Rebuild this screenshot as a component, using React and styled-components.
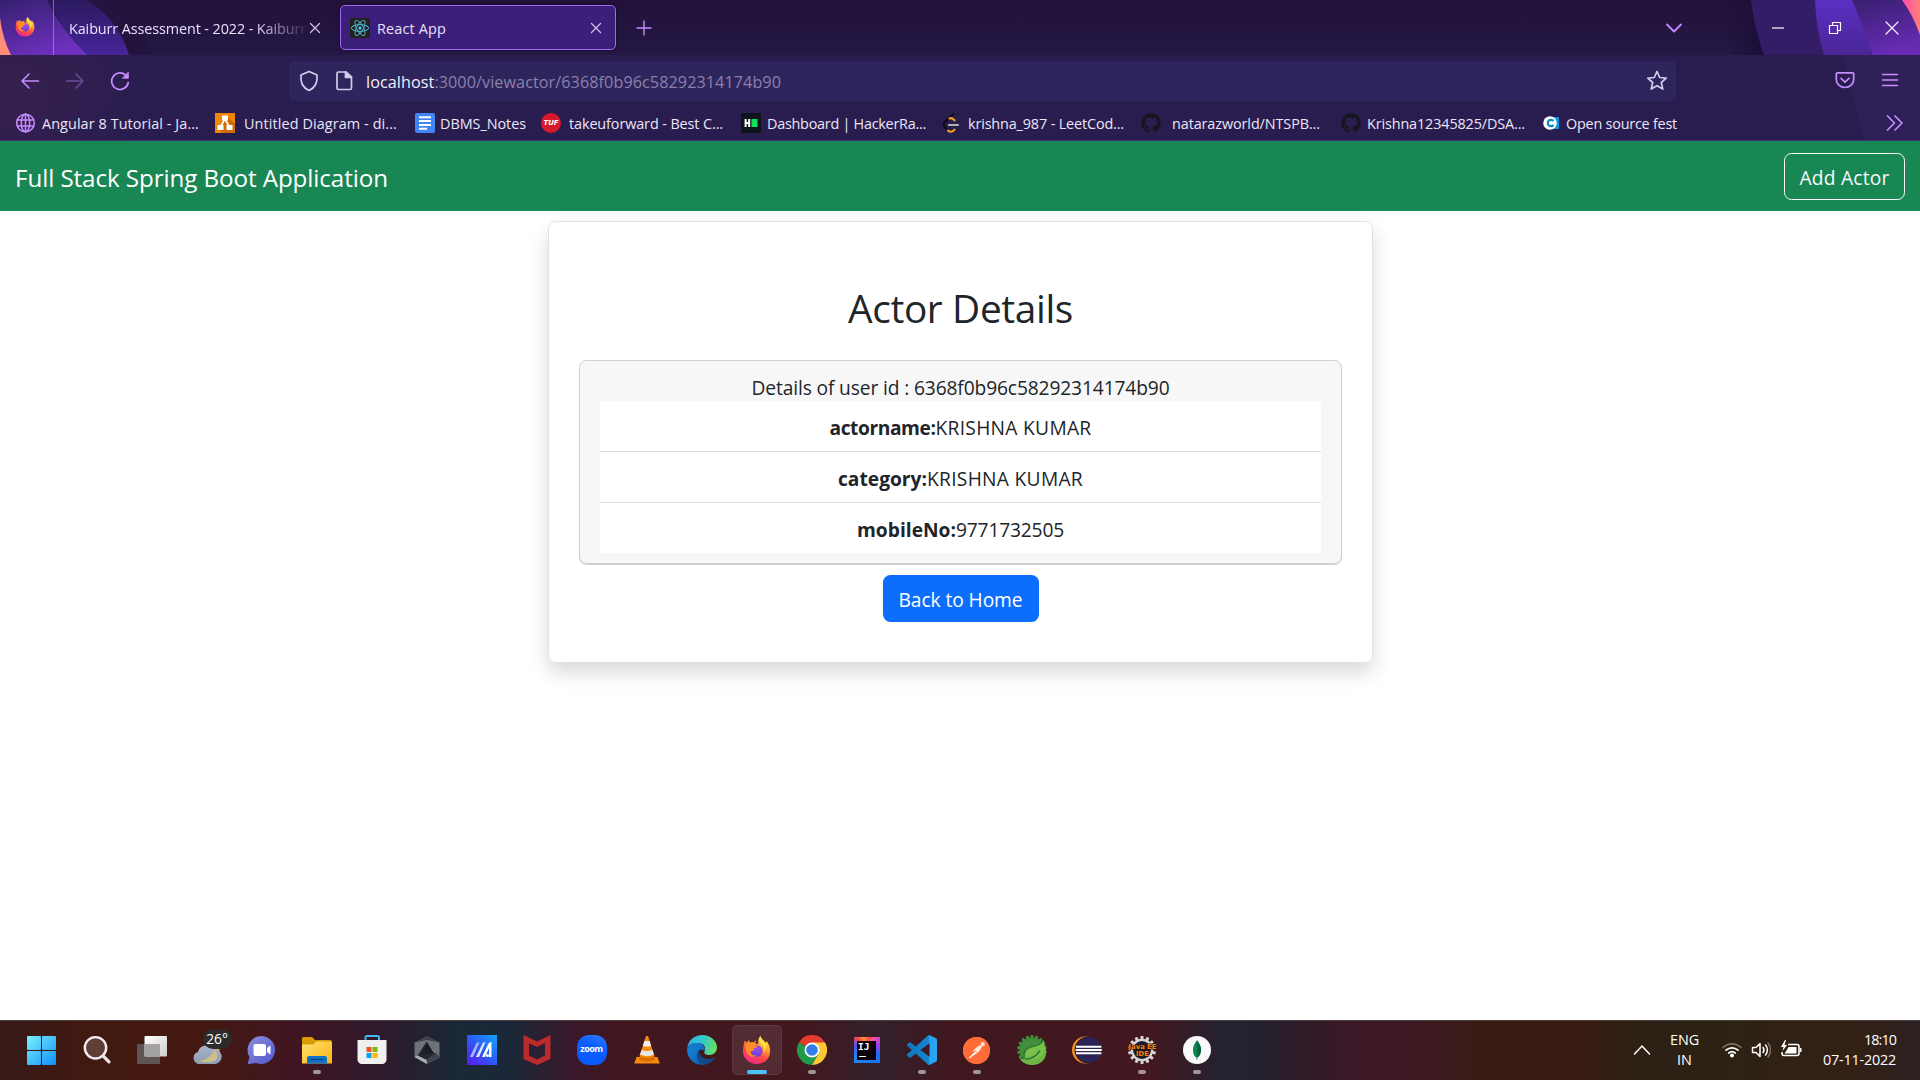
import React, { useLayoutEffect, useRef, useState } from 'react';
import styled, { createGlobalStyle } from 'styled-components';
import { FaGithub } from 'react-icons/fa';
import { SiPostman, SiReact } from 'react-icons/si';

const FONT = '"Open Sans", "Noto Sans", sans-serif';

const GlobalStyle = createGlobalStyle`
  *, *::before, *::after { box-sizing: border-box; }
  html, body { margin: 0; padding: 0; overflow: hidden; }
  body { font-family: ${FONT}; background: #fff; }
  svg { display: block; flex: none; }
  button { font-family: inherit; padding: 0; margin: 0; border: 0; background: none; color: inherit; }
`;

/* ---------- text that keeps a given measure ---------- */

const FitSpan = styled.span`
  display: inline-block;
  white-space: pre;
`;

function Fit({ w, children }) {
  const ref = useRef(null);
  const [spacing, setSpacing] = useState(0);
  useLayoutEffect(() => {
    const natural = ref.current.getBoundingClientRect().width;
    setSpacing((w - natural) / ref.current.textContent.length);
  }, [w]);
  return <FitSpan ref={ref} style={{ letterSpacing: `${spacing}px` }}>{children}</FitSpan>;
}

/* ---------- layout parts ---------- */

const Screen = styled.div`
  width: 1920px;
  height: 1080px;
  display: flex;
  flex-direction: column;
  overflow: hidden;
`;

const TabStrip = styled.header`
  position: relative;
  height: 55px;
  flex: none;
  display: flex;
  align-items: center;
  background: linear-gradient(#22123a, #251846);
  color: #e9e1fb;
  font-size: 14.4px;
`;

const ThemeArt = styled.svg`
  position: absolute;
  top: 0;
  ${p => (p.$right ? 'right: 0;' : 'left: 0;')}
`;

const FirefoxView = styled.div`
  position: relative;
  width: 54px;
  height: 55px;
  display: flex;
  align-items: center;
  padding: 0 0 2px 15px;
  border-right: 1px solid rgba(190, 170, 225, 0.55);
`;

const IdleTab = styled.div`
  position: relative;
  width: 286px;
  height: 45px;
  display: flex;
  align-items: center;
  padding: 1px 0 0 15px;
`;

const FadingTitle = styled.div`
  width: 237px;
  padding-top: 1px;
  overflow: hidden;
  -webkit-mask-image: linear-gradient(90deg, #000 78%, transparent 102%);
  mask-image: linear-gradient(90deg, #000 78%, transparent 102%);
  margin-right: 3px;
`;

const ActiveTab = styled.div`
  position: relative;
  width: 276px;
  height: 45px;
  display: flex;
  align-items: center;
  gap: 7px;
  padding: 1px 13px 0 9px;
  border: 1px solid #a566f5;
  border-radius: 5px;
  background: #3c1f7b;
  box-shadow: 0 0 5px rgba(0, 0, 0, 0.45);
`;

const Favicon = styled.span`
  width: 20px;
  height: 20px;
  display: grid;
  place-items: center;
  flex: none;
  border-radius: ${p => p.$radius || 0}px;
  background: ${p => p.$bg || 'transparent'};
  color: ${p => p.$color || 'inherit'};
`;

const Push = styled.div`
  flex: 1;
`;

const NewTab = styled.button`
  width: 20px;
  height: 20px;
  margin-left: 18px;
  display: grid;
  place-items: center;
`;

const AllTabs = styled.button`
  width: 40px;
  height: 53px;
  margin-right: 55px;
  display: grid;
  place-items: center;
`;

const WindowButtons = styled.div`
  position: relative;
  display: flex;
  align-items: center;
`;

const WindowButton = styled.button`
  width: 57px;
  height: 53px;
  display: grid;
  place-items: center;
`;

const Toolbars = styled.div`
  flex: none;
  height: 86px;
  border-bottom: 1px solid #3d2f6c;
  background:
    radial-gradient(ellipse 150px 95px at 0 45%, rgba(64, 34, 78, 0.6), transparent),
    linear-gradient(75deg, transparent 96%, rgba(55, 38, 100, 0.4) 96%),
    #291d4f;
`;

const NavBar = styled.div`
  height: 51px;
  display: flex;
  align-items: center;
  padding: 0 20px 0 17px;
`;

const NavButtons = styled.div`
  width: 272px;
  display: flex;
  gap: 19px;
`;

const NavButton = styled.button`
  width: 26px;
  height: 26px;
  display: grid;
  place-items: center;
  opacity: ${p => (p.$disabled ? 0.4 : 1)};
`;

const UrlBar = styled.div`
  width: 1387px;
  height: 40px;
  display: flex;
  align-items: center;
  border-radius: 5px;
  background: #2d255b;
  padding: 0 8px 0 9px;
  color: #8c80ad;
  font-size: 16.2px;

  svg + svg { margin-left: 13px; }
`;

const Address = styled.div`
  margin-left: 11px;
  padding-top: 3px;
  flex: 1;
  display: flex;

  b { font-weight: 400; color: #f3effd; }
`;

const NavTools = styled.div`
  flex: 1;
  display: flex;
  justify-content: flex-end;
  gap: 25px;
`;

const BookmarkBar = styled.div`
  height: 34px;
  display: flex;
  align-items: center;
  padding-left: 16px;
  color: #ebe6f7;
  font-size: 14.4px;
`;

const Bookmark = styled.div`
  width: ${p => p.$w}px;
  flex: none;
  display: flex;
  align-items: center;
  gap: ${p => p.$gap}px;
`;

const BookmarkText = styled.span`
  padding-top: 1px;
`;

const Overflow = styled.button`
  margin-right: 16px;
`;

const Page = styled.main`
  flex: 1;
  background: #fff;
  color: #212529;
  font-size: 19.2px;
  line-height: 30px;
`;

const AppNav = styled.nav`
  height: 70px;
  display: flex;
  align-items: center;
  justify-content: space-between;
  padding: 0 15px;
  background: #198754;
  color: #fff;
`;

const Brand = styled.div`
  font-size: 24.2px;
  padding: 4px 0 0;
`;

const OutlineButton = styled.button`
  width: 121px;
  height: 47px;
  border: 1px solid #f8f9fa;
  border-radius: 7.5px;
  padding-top: 3px;
  color: #f8f9fa;
  font-size: 19.2px;
  line-height: 30px;
`;

const Card = styled.section`
  width: 825px;
  height: 442px;
  margin: 10px 0 0 548px;
  padding: 60px 30px 0;
  display: flex;
  flex-direction: column;
  align-items: center;
  border: 1px solid #dee2e6;
  border-radius: 7.5px;
  box-shadow: 0 10px 20px rgba(0, 0, 0, 0.15);
`;

const Title = styled.h2`
  margin: 0;
  height: 78px;
  padding-top: 2px;
  font-weight: 400;
  font-size: 38.8px;
  line-height: 48px;
`;

const DetailCard = styled.div`
  width: 763px;
  height: 205px;
  padding: 10px 20px 0;
  border: 1px solid #cfcfcf;
  border-radius: 7.5px;
  background: #f7f7f7;
  box-shadow: inset 0 -1px 0 #cfcfcf;
  text-align: center;
`;

const CardLine = styled.div`
  height: 30px;
  line-height: 33px;
`;

const List = styled.ul`
  margin: 0;
  padding: 0;
  list-style: none;
  background: #fff;
`;

const Item = styled.li`
  height: 51px;
  padding-top: 12px;
  border-bottom: 1px solid #dfdfdf;

  &:last-child { height: 50px; border-bottom: 0; }
  b { font-weight: 700; }
`;

const PrimaryButton = styled.button`
  width: 156px;
  height: 47px;
  margin-top: 10px;
  padding-top: 3px;
  border-radius: 7.5px;
  background: #0d6efd;
  color: #fff;
  font-size: 19.2px;
  line-height: 30px;
`;

const Taskbar = styled.footer`
  height: 60px;
  flex: none;
  display: flex;
  justify-content: space-between;
  padding: 0 24px 0 14px;
  border-top: 1px solid #4c3f40;
  background: linear-gradient(90deg,
    #381a18 0, #42190f 110px, #431812 210px, #401523 300px, #2e1a2c 385px,
    #192937 460px, #1b2738 510px, #38192a 570px, #41171f 620px, #42181f 800px,
    #33202a 880px, #41171f 950px, #42171f 1150px, #242230 1225px,
    #22222f 1255px, #321a28 1310px, #3f1726 1370px, #3f1922 1420px, #381c13 1480px,
    #381c12 1590px, #2c2114 1645px, #2c2214 1720px, #332014 1850px, #2b2022 1920px);
  color: #fff;
`;

const Apps = styled.div`
  display: grid;
  grid-template-columns: repeat(22, 55px);
  padding-top: 4px;
`;

const AppTile = styled.div`
  position: relative;
  width: 50px;
  height: 50px;
  justify-self: center;
  display: grid;
  place-items: center;
  border-radius: 5px;
  background: ${p => (p.$active ? 'rgba(255,255,255,0.09)' : 'transparent')};
  box-shadow: ${p => (p.$active ? 'inset 0 0 0 1px rgba(255,255,255,0.06)' : 'none')};
`;

const RunMark = styled.i`
  position: absolute;
  left: 50%;
  bottom: 1px;
  transform: translateX(-50%);
  width: ${p => (p.$active ? 20 : 8)}px;
  height: 4px;
  border-radius: 2px;
  background: ${p => (p.$active ? '#4cc2ff' : '#a3969a')};
`;

const TempBadge = styled.span`
  position: absolute;
  left: 21px;
  top: 4px;
  width: 29px;
  height: 20px;
  border-radius: 10px;
  background: #2d2b2b;
  font-size: 13.8px;
  line-height: 20px;
  text-align: center;
`;

const Tray = styled.div`
  display: flex;
  align-items: center;
  padding-bottom: 1px;
  font-size: 14.4px;
  line-height: 20px;
`;

const TrayStack = styled.div`
  display: flex;
  flex-direction: column;
  align-items: ${p => p.$align};
  margin: ${p => p.$margin};
`;

const TrayIcons = styled.div`
  display: flex;
  align-items: center;
  gap: 9px;
`;

/* ---------- line icons ---------- */

const Line = ({ size = 20, w = 1.6, color = '#c58cff', children }) => (
  <svg width={size} height={size} viewBox={`0 0 ${size} ${size}`} fill="none" stroke={color}
    strokeWidth={w} strokeLinecap="round" strokeLinejoin="round">{children}</svg>
);

const Close = () => (
  <Line size={12} w={1.2} color="#cfc4e6"><path d="M1.5 1.5l9 9M10.5 1.5l-9 9" /></Line>
);

/* ---------- colour icons ---------- */

const Firefox = ({ size, id }) => (
  <svg width={size} height={size} viewBox="0 0 30 30">
    <defs>
      <linearGradient id={`${id}a`} x1=".8" y1="0" x2=".3" y2="1">
        <stop offset="0" stopColor="#fff44f" /><stop offset=".35" stopColor="#ffa52b" />
        <stop offset=".65" stopColor="#ff4a48" /><stop offset="1" stopColor="#f0278c" />
      </linearGradient>
      <radialGradient id={`${id}b`} cx=".6" cy=".3" r=".8">
        <stop offset="0" stopColor="#a44bf0" /><stop offset="1" stopColor="#5b3fd6" />
      </radialGradient>
    </defs>
    <path d="M19 0c1.200 3.400 3.400 4.600 5.300 7 .8-.2.9-1 .8-2 3 3.400 4.200 7.300 3.900 11.500C28.500 24 22.600 29 15.200 29 7.300 29 1 23.300 1 15.600c0-4 1-7.500 1.800-10.600 1 .8 1.600 1.300 2.300 2.300.4-1.500 1-2.300 2-3 .3 1 .7 1.700 1.400 2.300 1.500-.2 2.500-.1 3.500.3C13 5.600 14 4.900 15.500 4.700c-1.200.8-1.900 1.800-2 3 1 .2 2.300.2 3.500.4C16.500 5 17 2 19 0z" fill={`url(#${id}a)`} />
    <circle cx="15" cy="15.500" r="6.200" fill={`url(#${id}b)`} />
    <path d="M4 9c3-2.500 6.500-1.500 8.500.5 1.600.4 3.200 0 4 .8-.7 1.500-3 1.700-4 2.600-.6 1 .2 2.100-.8 2.600-1.400.4-2.300-.4-2.700.8-.1 3 3.500 4.500 6.500 3.700-3 3-9.500 1.500-11-4C3.800 13 3.500 11 4 9z" fill="#ff8a2a" />
    <path d="M19 0c-1.500 3-.5 6.500 2 9 2 2 2.200 6 .5 9 3.500-3 4.500-7.500 2.800-11C22 4.600 20.200 3.400 19 0z" fill="#ffe04a" />
  </svg>
);

const Windows = () => (
  <svg width="30" height="30" viewBox="0 0 30 30">
    <defs><linearGradient id="win" x1="0" y1="0" x2="30" y2="30" gradientUnits="userSpaceOnUse">
      <stop offset="0" stopColor="#7df3ff" /><stop offset="1" stopColor="#0a8cf5" /></linearGradient></defs>
    <g fill="url(#win)"><rect x="0" y="1" width="14" height="14" rx="1" /><rect x="15" y="1" width="14" height="14" rx="1" />
      <rect x="0" y="16" width="14" height="14" rx="1" /><rect x="15" y="16" width="14" height="14" rx="1" /></g>
  </svg>
);

const Search = () => (
  <svg width="30" height="30" viewBox="0 0 30 30" fill="none">
    <circle cx="13.500" cy="12.800" r="10.700" fill="#6b4a42" fillOpacity=".75" stroke="#efeeee" strokeWidth="2.400" />
    <path d="M21 20.800l6 6" stroke="#e6e4e4" strokeWidth="3.300" strokeLinecap="round" />
  </svg>
);

const TaskView = () => (
  <svg width="30" height="30" viewBox="0 0 30 30">
    <defs><linearGradient id="tv" x1="0" y1="0" x2="1" y2="1"><stop offset="0" stopColor="#fff" /><stop offset="1" stopColor="#d0cccc" /></linearGradient></defs>
    <rect x="0" y="9" width="23" height="20" rx="1" fill="#5d5553" />
    <rect x="7.500" y="1" width="22.500" height="20.500" rx="1" fill="url(#tv)" />
    <rect x="7.500" y="9" width="15.500" height="12.500" fill="#a4a2a2" />
  </svg>
);

const Weather = () => (
  <svg width="30" height="30" viewBox="0 0 30 30">
    <defs><linearGradient id="cl" x1="0" y1="0" x2="0" y2="1"><stop offset="0" stopColor="#a9b4c8" /><stop offset="1" stopColor="#8d9bb5" /></linearGradient></defs>
    <rect x="18" y="12" width="9.500" height="9" fill="#f6a70f" />
    <path d="M6.500 29A6.200 6.200 0 0 1 6 17a8 8 0 0 1 14.500-3 7.600 7.600 0 0 1 3 15z" fill="url(#cl)" />
    <path d="M6 26c7-.5 13-4 16-11 5 4 4 10-1 11.500-5 1.500-11 .8-15-.5z" fill="#cdbf86" />
  </svg>
);

const Chat = () => (
  <svg width="30" height="30" viewBox="0 0 30 30">
    <defs><linearGradient id="ch" x1="0" y1="0" x2="1" y2="1"><stop offset="0" stopColor="#8d8fe0" /><stop offset="1" stopColor="#5056c8" /></linearGradient></defs>
    <path d="M15 1a14 14 0 1 1-6 27L.5 29.200 2.500 22A14 14 0 0 1 15 1z" fill="url(#ch)" />
    <rect x="6.500" y="9" width="12.500" height="12" rx="2" fill="#fff" /><path d="M20 13l3.500-2.800v9.600L20 17z" fill="#fff" />
  </svg>
);

const Explorer = () => (
  <svg width="30" height="30" viewBox="0 0 30 30">
    <defs><linearGradient id="ex" x1="0" y1="0" x2="1" y2="1"><stop offset="0" stopColor="#ffe071" /><stop offset="1" stopColor="#fbb413" /></linearGradient></defs>
    <path d="M0 3.500A1.500 1.500 0 0 1 1.500 2H10l3 3h15a2 2 0 0 1 2 2v3H0z" fill="#d99a06" />
    <path d="M0 9.500h11l3.500-3H28.500A1.500 1.500 0 0 1 30 8v20.500H0z" fill="url(#ex)" />
    <path d="M5 28.500V23a2 2 0 0 1 2-2h16a2 2 0 0 1 2 2v5.500z" fill="#0f74c8" /><path d="M8.500 24.500h13" stroke="#063f78" strokeWidth="1.200" />
  </svg>
);

const Store = () => (
  <svg width="30" height="30" viewBox="0 0 30 30">
    <path d="M8.500 6V2.300A1.300 1.300 0 0 1 9.800 1h10.900A1.300 1.300 0 0 1 22 2.300V6" fill="none" stroke="#3bb8ee" strokeWidth="2" />
    <path d="M.5 5h29v19.500a4.500 4.500 0 0 1-4.500 4.500H5A4.500 4.500 0 0 1 .5 24.500z" fill="#f0f0f0" />
    <path fill="#f25022" d="M9.500 12h5v5h-5z" /><path fill="#7fba00" d="M15.500 12h5v5h-5z" /><path fill="#00a4ef" d="M9.500 18h5v5h-5z" /><path fill="#ffb900" d="M15.500 18h5v5h-5z" />
  </svg>
);

const Armoury = () => (
  <svg width="30" height="30" viewBox="0 0 30 30">
    <path d="M15 1.500l12.500 6v15L15 29 2.500 22V7.500z" fill="#6d737b" /><path d="M2.500 7.500l12.500-6 12.500 6L15 5z" fill="#3e4147" />
    <path d="M15 6L5.500 20.500l9 4.500L24 18z" fill="#25282e" /><path d="M15 6l9 12-9.500-1z" fill="#85898f" />
    <path d="M15 7l-6 13 13-2z" fill="#1b1d21" /><path d="M24 18l3.500 4L15 29l-.5-4z" fill="#3d424a" />
    <path d="M2.500 22l3-1.500 9 4.500.5 4z" fill="#a9aeb5" />
  </svg>
);

const MyAsus = () => (
  <svg width="30" height="30" viewBox="0 0 30 30">
    <defs><linearGradient id="ma" x1="1" y1="0" x2="0" y2="1"><stop offset="0" stopColor="#12a5ff" /><stop offset=".5" stopColor="#2c5bf5" /><stop offset="1" stopColor="#5f14f0" /></linearGradient></defs>
    <path fill="url(#ma)" d="M0 0h30v30H0z" />
    <path d="M3 22l6-13q1-2 3.500-2L6 22z" fill="#a9b8fb" /><path d="M9 22L15.500 8.500Q16.200 7 18.500 7L12 22z" fill="#dfe8ff" />
    <path d="M15 22L21.500 8.500Q22.200 7 24.500 7v15h-2.500V13l-4 9z" fill="#fff" /><circle cx="20.500" cy="20.500" r="1.500" fill="#fff" />
  </svg>
);

const McAfee = () => (
  <svg width="30" height="30" viewBox="0 0 30 30">
    <path d="M1.500 0l13.500 6.500L28.500 0v24L15 30 1.500 24zm5.500 8v12.500l8 4 8-4V8L15 12z" fill="#bb2b2c" fillRule="evenodd" />
  </svg>
);

const ZoomDisc = styled.span`
  width: 30px;
  height: 30px;
  border-radius: 12px;
  background: linear-gradient(200deg, #2f7dff, #0b5cff 40%);
  font: 700 9px/28px "Open Sans", sans-serif;
  text-align: center;
  letter-spacing: -0.5px;
`;

const Vlc = () => (
  <svg width="30" height="30" viewBox="0 0 30 30">
    <path d="M4.500 22h21l2.200 6.500H2.300z" fill="#f58a0b" /><path d="M8 20h14l1 5q-8 3-16 0z" fill="#d96f04" />
    <path d="M14 1h2l6.500 20q-7.500 4-15 0z" fill="#f58a0b" />
    <path d="M12.400 6h5.200l1.600 5q-4.200 1.500-8.400 0z" fill="#eee" /><path d="M9.500 15q5.500 2 11 0l1.500 4.500q-7 3-14 0z" fill="#e6e6e6" />
  </svg>
);

const Edge = () => (
  <svg width="30" height="30" viewBox="0 0 30 30">
    <defs>
      <linearGradient id="e1" x1="0" y1=".3" x2="1" y2=".5"><stop offset="0" stopColor="#2fb4ea" /><stop offset=".55" stopColor="#35c9c6" /><stop offset="1" stopColor="#6ae05c" /></linearGradient>
      <linearGradient id="e2" x1="0" y1="0" x2="1" y2="1"><stop offset="0" stopColor="#1b8fe0" /><stop offset="1" stopColor="#0c56a8" /></linearGradient>
    </defs>
    <path d="M.2 13C1.500 5 7.500 0 15 0c8.500 0 15 6 15 12.500 0 4.500-3.500 7.500-7.500 7.500-3.500 0-6-1.500-5-3.500 1.500-3 .5-8-6-8.500C6 7.500 1.500 9.500.2 13z" fill="url(#e1)" />
    <path d="M.1 14C1.500 9.500 6 7.500 10.500 8c6 .7 8 4.500 7 8.500-1-2-3.500-3-5.500-1-3.500 3.500-2 10 3 14.300C7 30 0 23.500.1 14z" fill="url(#e2)" />
    <path d="M12 15.500c-3.500 3.500-1.800 10.500 3 14.500 5 0 9.500-2.500 12-6 .6-1-.3-1.500-1-1-6 3-14.500-1-14-7.500z" fill="#114a8c" />
    <path d="M1.500 12c2-3 5.500-4.300 9-4 2.500.3 4.500 1.200 5.700 2.600C10 9 4 13 5 23 1.500 20 .5 16 1.500 12z" fill="#1479cf" />
  </svg>
);

const Chrome = () => (
  <svg width="30" height="30" viewBox="0 0 30 30">
    <path d="M15 15L2 7.500A15 15 0 0 1 28 7.500z" fill="#e33b2e" />
    <path d="M15 15l-13-7.500A15 15 0 0 0 15 30l6.500-11.250z" fill="#229a48" />
    <path d="M15 7.500h13A15 15 0 0 1 15 30l6.500-11.250z" fill="#fcc934" />
    <circle cx="15" cy="15" r="7.500" fill="#fff" /><circle cx="15" cy="15" r="5.800" fill="#2f7de9" />
  </svg>
);

const IdeaTile = styled.span`
  width: 26px;
  height: 26px;
  padding: 3.5px;
  background: conic-gradient(from 20deg, #fe5a8f, #a63cf0 12%, #1a6df5 25%, #1a87f5 60%, #5b4df0 76%, #fc4a3a 84%, #ff8f2e 90%, #fe315d);
`;

const IdeaFace = styled.span`
  display: block;
  width: 19px;
  height: 19px;
  background: #0a0208;
  font: 700 9.5px/10px "DejaVu Sans Mono", monospace;
  padding: 1px 0 0 1px;

  &::after {
    content: '';
    display: block;
    width: 7px;
    height: 1.5px;
    margin: 4px 0 0 1px;
    background: #fff;
  }
`;

const VSCode = () => (
  <svg width="30" height="30" viewBox="0 0 24 24">
    <defs><linearGradient id="vs" x1="0" y1="0" x2="1" y2="0"><stop offset="0" stopColor="#1276bd" /><stop offset=".72" stopColor="#1584cf" /><stop offset=".74" stopColor="#25a3ef" /><stop offset="1" stopColor="#2aa6f2" /></linearGradient></defs>
    <path fill="url(#vs)" d="M23.150 2.587L18.210.21a1.494 1.494 0 0 0-1.705.29l-9.460 8.630-4.120-3.128a.999.999 0 0 0-1.276.057L.327 7.261A1 1 0 0 0 .326 8.740L3.899 12 .326 15.260a1 1 0 0 0 .001 1.479L1.650 17.940a.999.999 0 0 0 1.276.057l4.120-3.128 9.460 8.630a1.492 1.492 0 0 0 1.704.29l4.942-2.377A1.500 1.500 0 0 0 24 20.060V3.939a1.500 1.500 0 0 0-.85-1.352zm-5.146 14.861L10.826 12l7.178-5.448v10.896z" />
  </svg>
);

const PostmanDisc = styled.span`
  width: 27px;
  height: 27px;
  border-radius: 50%;
  background: radial-gradient(#fff 60%, #ff6c37 61%);
  color: #ff6c37;
`;

const Cog = ({ teeth = 12, r, depth, c = 15, fill }) => (
  <g fill={fill}>
    <circle cx={c} cy={c} r={r} />
    {Array.from({ length: teeth }, (_, i) => (
      <rect key={i} x={c - 1.5} y={c - r - depth} width="3" height={depth + 2} rx=".5"
        transform={`rotate(${(360 / teeth) * i} ${c} ${c})`} />
    ))}
  </g>
);

const Spring = () => (
  <svg width="30" height="30" viewBox="0 0 30 30">
    <Cog teeth={18} r={12.6} depth={2.2} fill="#3f8f3c" />
    <path d="M2 23C8 26 22 25 27 9c5 8 1.500 21-12 21-6 0-10-3-13-7z" fill="#6db543" />
    <path d="M26.500 5c2 8 1.500 15.500-5.500 18.500-5 1.700-9 .5-13 0C7 14 12 12 18 11c4.500-.6 7-2.500 8.500-6z" fill="#78c04a" />
    <path d="M26.500 5c-2 3.500-4.500 5.300-8.500 6C10 12 6.500 15 7 21.500L4 24M8 24c6 0 11-2 15-8.500" fill="none" stroke="#2f7a35" strokeWidth="1.500" />
  </svg>
);

const Eclipse = () => (
  <svg width="30" height="30" viewBox="0 0 30 30">
    <circle cx="13.500" cy="15" r="13.500" fill="#f7941e" /><circle cx="16" cy="15" r="13.500" fill="#43191f" /><circle cx="16.700" cy="15" r="13" fill="#2c2255" />
    <path d="M4 11.800h25.400M3.600 15h26.200M4 18.200h25.400" stroke="#fff" strokeWidth="1.900" />
  </svg>
);

const JavaEE = () => (
  <svg width="30" height="30" viewBox="0 0 30 30">
    <Cog teeth={14} r={11.2} depth={2.8} fill="#d5d5d3" />
    <circle cx="15" cy="15" r="9" fill="#1d1a30" />
    <g fill="#f28413" stroke="#2a1608" strokeWidth="1.200" paintOrder="stroke" fontFamily="DejaVu Sans" fontWeight="700" textAnchor="middle">
      <text x="15.500" y="14" fontSize="6.800">Java EE</text><text x="15.500" y="20.800" fontSize="6.800">IDE</text>
    </g>
  </svg>
);

const Mongo = () => (
  <svg width="30" height="30" viewBox="0 0 30 30">
    <circle cx="15" cy="15" r="14" fill="#fafafa" />
    <path d="M15 5c1 2.500 4 4.500 4 10 0 4-2 6.500-3.600 7.500L15.200 25h-.6l-.2-2.500C12.500 21.500 11 19 11 15c0-5.500 3-7.500 4-10z" fill="#0c8554" />
    <path d="M15 5c1 2.500 4 4.500 4 10 0 4-2 6.500-3.600 7.500z" fill="#06633f" />
  </svg>
);

/* ---------- bookmark favicons ---------- */

const Globe = () => (
  <Line size={20} w={1.5}><circle cx="9.500" cy="10" r="8.800" /><ellipse cx="9.500" cy="10" rx="4.200" ry="8.800" /><path d="M9.500 1v18M1.300 7h16.400M1.300 13h16.400" /></Line>
);

const Drawio = () => (
  <svg width="20" height="20" viewBox="0 0 20 20">
    <path fill="#f08705" d="M0 0h20v20H0z" /><path fill="#d06b08" d="M12 3l8 8v9H8l-5-4z" />
    <path d="M10 6L5.500 14M10 6l4.500 8" stroke="#fff" strokeWidth="1.600" />
    <path fill="#fff" d="M7 2.500h6v5H7zM2.500 12h6v5h-6zM11.500 12h6v5h-6z" />
  </svg>
);

const Docs = () => (
  <svg width="20" height="20" viewBox="0 0 20 20">
    <rect width="20" height="20" rx="2" fill="#4285f4" /><path d="M4 4.200h12M4 8.100h12M4 12h12M4 15.800h8" stroke="#fff" strokeWidth="2" />
  </svg>
);

const Tuf = styled.span`
  width: 20px;
  height: 20px;
  border-radius: 50%;
  background: #d8192e;
  color: #fff;
  font: italic 800 7px/20px "DejaVu Sans", sans-serif;
  text-align: center;
`;

const HackerRank = () => (
  <svg width="20" height="20" viewBox="0 0 20 20">
    <path fill="#0e141e" d="M0 0h20v20H0z" /><path d="M4.600 6v8M8.200 6v8M4.600 10h3.600" stroke="#fff" strokeWidth="2" /><path fill="#10e05c" d="M10.500 6h6v8h-6z" />
  </svg>
);

const LeetCode = () => (
  <svg width="20" height="20" viewBox="0 0 20 20" fill="none" strokeLinecap="round" strokeWidth="2.100">
    <path d="M12 1.200L3.500 9.500a3 3 0 0 0 0 4l3.500 4" stroke="#0c0a10" /><path d="M8.500 5.500c1.500-.8 3.500-.2 5 1.800M7 17.500c2 2 4.500 1.500 6.500-.8" stroke="#f89f1b" /><path d="M8 12h9" stroke="#b3b1b0" />
  </svg>
);

const CodeIn = () => (
  <svg width="16" height="14" viewBox="0 0 16 14">
    <path fill="#0c94dc" d="M8 1h8v12H8z" /><circle cx="7" cy="7" r="6.800" fill="#fff" />
    <path d="M10.500 5A3.200 3.200 0 1 0 10.500 9" fill="none" stroke="#0c86d0" strokeWidth="2.200" />
  </svg>
);

const BOOKMARKS = [
  { w: 199, gap: 6, text: 'Angular 8 Tutorial - Ja...', tw: 157, icon: <Favicon><Globe /></Favicon> },
  { w: 200, gap: 9, text: 'Untitled Diagram - di...', tw: 153, icon: <Favicon><Drawio /></Favicon> },
  { w: 126, gap: 5, text: 'DBMS_Notes', tw: 86, icon: <Favicon><Docs /></Favicon> },
  { w: 200, gap: 8, text: 'takeuforward - Best C...', tw: 154, icon: <Tuf>TUF</Tuf> },
  { w: 200, gap: 6, text: 'Dashboard | HackerRa...', tw: 159, icon: <Favicon><HackerRank /></Favicon> },
  { w: 200, gap: 7, text: 'krishna_987 - LeetCod...', tw: 156, icon: <Favicon><LeetCode /></Favicon> },
  { w: 200, gap: 11, text: 'natarazworld/NTSPB...', tw: 148, icon: <Favicon $color="#17151c"><FaGithub size={20} /></Favicon> },
  { w: 202, gap: 6, text: 'Krishna12345825/DSA...', tw: 158, icon: <Favicon $color="#17151c"><FaGithub size={20} /></Favicon> },
  { w: 140, gap: 7, text: 'Open source fest', tw: 111, icon: <CodeIn /> },
];

const APPS = [
  { icon: <Windows /> },
  { icon: <Search /> },
  { icon: <TaskView /> },
  { icon: <><Weather /><TempBadge>26°</TempBadge></> },
  { icon: <Chat /> },
  { icon: <Explorer />, run: true },
  { icon: <Store /> },
  { icon: <Armoury /> },
  { icon: <MyAsus /> },
  { icon: <McAfee /> },
  { icon: <ZoomDisc>zoom</ZoomDisc> },
  { icon: <Vlc /> },
  { icon: <Edge /> },
  { icon: <Firefox size={29} id="ft" />, run: true, active: true },
  { icon: <Chrome />, run: true },
  { icon: <IdeaTile><IdeaFace>IJ</IdeaFace></IdeaTile> },
  { icon: <VSCode />, run: true },
  { icon: <PostmanDisc><SiPostman size={27} /></PostmanDisc>, run: true },
  { icon: <Spring /> },
  { icon: <Eclipse /> },
  { icon: <JavaEE />, run: true },
  { icon: <Mongo />, run: true },
];

const DETAILS = [
  { label: 'actorname:', lw: 106, value: 'KRISHNA KUMAR', vw: 156 },
  { label: 'category:', lw: 89, value: 'KRISHNA KUMAR', vw: 156 },
  { label: 'mobileNo:', lw: 99, value: '9771732505', vw: 108 },
];

function Tabs() {
  return (
    <TabStrip>
      <ThemeArt width="200" height="55" viewBox="0 0 200 55">
        <defs>
          <linearGradient id="l1" x1="0" y1="0" x2=".5" y2="1"><stop offset="0" stopColor="#35206e" /><stop offset="1" stopColor="#6c30bd" /></linearGradient>
          <linearGradient id="l2" x1="0" y1="0" x2="0" y2="1"><stop offset="0" stopColor="#2b1a5e" /><stop offset="1" stopColor="#47259a" /></linearGradient>
        </defs>
        <path d="M84 0h30q30 25 38 55h-30z" fill="#22133f" />
        <path d="M47 0h40q32 20 42 55H80z" fill="url(#l2)" />
        <path d="M0 0h47q14 30 40 55H0z" fill="url(#l1)" />
        <path d="M0 18Q3 40 11 55H0z" fill="#ff8d78" />
      </ThemeArt>
      <ThemeArt $right width="220" height="55" viewBox="0 0 220 55">
        <defs>
          <linearGradient id="r0" x1="0" y1="0" x2="1" y2="0"><stop offset="0" stopColor="#1c1038" stopOpacity="0" /><stop offset="1" stopColor="#190d36" /></linearGradient>
          <linearGradient id="r1" x1="0" y1="0" x2="0" y2="1"><stop offset="0" stopColor="#5a30c4" /><stop offset="1" stopColor="#4a2596" /></linearGradient>
          <linearGradient id="r2" x1="0" y1="0" x2=".3" y2="1"><stop offset="0" stopColor="#381f70" /><stop offset="1" stopColor="#662bb2" /></linearGradient>
          <linearGradient id="r3" x1="0" y1="0" x2="1" y2="0"><stop offset="0" stopColor="#ff4aa5" /><stop offset="1" stopColor="#ff7f7a" /></linearGradient>
        </defs>
        <path d="M20 0h36l10 55H30z" fill="url(#r0)" />
        <path d="M51 0h64l10 55H64Q54 28 51 0z" fill="#321d66" />
        <path d="M115 0h45l20 55h-56q-8-26-9-55z" fill="url(#r1)" />
        <path d="M152 0h68v55h-47q-6-18-21-55z" fill="url(#r2)" />
        <path d="M202 0h18v35Q213 15 202 0z" fill="url(#r3)" />
      </ThemeArt>
      <FirefoxView><Firefox size={20} id="fv" /></FirefoxView>
      <IdleTab>
        <FadingTitle><Fit w={237}>Kaiburr Assessment - 2022 - Kaiburr</Fit></FadingTitle>
        <Close />
      </IdleTab>
      <ActiveTab>
        <Favicon $bg="#222" $radius={2} $color="#53c1de"><SiReact size={18} /></Favicon>
        <Fit w={69}>React App</Fit>
        <Push />
        <Close />
      </ActiveTab>
      <NewTab><Line size={20} w={1.4}><path d="M3 10h14M10 3v14" /></Line></NewTab>
      <Push />
      <AllTabs><Line size={20} w={1.8}><path d="M3 6.500l7 7 7-7" /></Line></AllTabs>
      <WindowButtons>
        <WindowButton><Line size={14} w={1.2} color="#fff"><path d="M1 7h12" strokeLinecap="butt" /></Line></WindowButton>
        <WindowButton><Line size={14} w={1.2} color="#fff"><path d="M1.500 4.500h8v8h-8zM4.500 4.500v-3h8v8h-3" strokeLinejoin="miter" /></Line></WindowButton>
        <WindowButton><Line size={14} w={1.3} color="#f2ecff"><path d="M1 1l12 12M13 1L1 13" /></Line></WindowButton>
      </WindowButtons>
    </TabStrip>
  );
}

function BrowserBars() {
  return (
    <Toolbars>
      <NavBar>
        <NavButtons>
          <NavButton><Line size={20} w={1.6}><path d="M18.500 10H2M9 3l-7 7 7 7" /></Line></NavButton>
          <NavButton $disabled><Line size={20} w={1.6}><path d="M1.500 10H18M11 3l7 7-7 7" /></Line></NavButton>
          <NavButton><Line size={20} w={1.7}><path d="M18.200 11.500A8.300 8.300 0 1 1 15.500 4L18 6" /><path d="M18.300 1.500v5.700h-5.600z" fill="#c58cff" strokeWidth=".8" /></Line></NavButton>
        </NavButtons>
        <UrlBar>
          <Line size={22} w={1.7} color="#d5cbec"><path d="M11 1.500l8 3.500c.8 7-1.500 12.500-8 15.500C4.500 17.500 2.200 12 3 5z" /></Line>
          <Line size={22} w={1.7} color="#d5cbec"><path d="M5.500 2h7.500l5.500 5v11a1.500 1.500 0 0 1-1.500 1.500H5.500A1.500 1.500 0 0 1 4 18V3.500A1.500 1.500 0 0 1 5.500 2z" /><path d="M12.500 2v5.500h5.800z" fill="#d5cbec" /></Line>
          <Address><Fit w={415}><b>localhost</b>:3000/viewactor/6368f0b96c58292314174b90</Fit></Address>
          <Line size={22} w={1.7} color="#d5cbec"><path d="M11 1.500l2.700 6 6.500.7-4.900 4.300 1.500 6.600-5.800-3.400-5.800 3.400 1.500-6.600-4.900-4.300 6.500-.7z" /></Line>
        </UrlBar>
        <NavTools>
          <Line size={20} w={1.7}><path d="M2.500 1.800h15a1.200 1.200 0 0 1 1.200 1.200v5.500a8.700 8 0 0 1-17.400 0V3a1.200 1.200 0 0 1 1.200-1.200z" /><path d="M6 7.300l4 3.800 4-3.800" /></Line>
          <Line size={20} w={1.5}><path d="M2.500 3.500h15M2.500 9h15M2.500 14.500h15" /></Line>
        </NavTools>
      </NavBar>
      <BookmarkBar>
        {BOOKMARKS.map(b => (
          <Bookmark key={b.text} $w={b.w} $gap={b.gap}>
            {b.icon}
            <BookmarkText><Fit w={b.tw}>{b.text}</Fit></BookmarkText>
          </Bookmark>
        ))}
        <Push />
        <Overflow><Line size={20} w={1.7}><path d="M3.500 3l7 7-7 7M11 3l7 7-7 7" /></Line></Overflow>
      </BookmarkBar>
    </Toolbars>
  );
}

function ActorPage() {
  return (
    <Page>
      <AppNav>
        <Brand><Fit w={373}>Full Stack Spring Boot Application</Fit></Brand>
        <OutlineButton><Fit w={90}>Add Actor</Fit></OutlineButton>
      </AppNav>
      <Card>
        <Title><Fit w={225}>Actor Details</Fit></Title>
        <DetailCard>
          <CardLine><Fit w={418}>Details of user id : 6368f0b96c58292314174b90</Fit></CardLine>
          <List>
            {DETAILS.map(d => (
              <Item key={d.label}><b><Fit w={d.lw}>{d.label}</Fit></b><Fit w={d.vw}>{d.value}</Fit></Item>
            ))}
          </List>
        </DetailCard>
        <PrimaryButton><Fit w={124}>Back to Home</Fit></PrimaryButton>
      </Card>
    </Page>
  );
}

function SystemBar() {
  return (
    <Taskbar>
      <Apps>
        {APPS.map((a, i) => (
          <AppTile key={i} $active={a.active}>
            {a.icon}
            {a.run && <RunMark $active={a.active} />}
          </AppTile>
        ))}
      </Apps>
      <Tray>
        <Line size={18} w={1.5} color="#fff"><path d="M1.500 13l7.500-8 7.500 8" /></Line>
        <TrayStack $align="center" $margin="0 23px 0 19px"><Fit w={29}>ENG</Fit><Fit w={15}>IN</Fit></TrayStack>
        <TrayIcons>
          <Line size={20} w={1.7} color="#fff">
            <path d="M1 7.500a13 13 0 0 1 18 0" opacity=".35" /><path d="M4 10.200a8.800 8.800 0 0 1 12 0M6.800 13a5 5 0 0 1 6.400 0" /><circle cx="10" cy="15.500" r="1.200" fill="#fff" />
          </Line>
          <Line size={20} w={1.5} color="#fff">
            <path d="M1.500 7.500H5l4-4v13l-4-4H1.500z" /><path d="M12 7.500a4 4 0 0 1 0 5M14.500 5a7.500 7.500 0 0 1 0 10" /><path d="M17 3a11 11 0 0 1 0 14" opacity=".35" />
          </Line>
          <svg width="22" height="20" viewBox="0 0 22 20">
            <path d="M8 4.500h9a2 2 0 0 1 2 2v7a2 2 0 0 1-2 2H4a2 2 0 0 1-2-2V12" fill="none" stroke="#fff" strokeWidth="1.600" />
            <path d="M8.500 7h8v6.500h-12l2-3z" fill="#fff" /><path d="M5 0L1 7h2.500L2.500 11 7 5H4.500L6 0z" fill="#fff" /><path d="M20 8h1.500v4H20z" fill="#fff" />
          </svg>
        </TrayIcons>
        <TrayStack $align="flex-end" $margin="0 0 0 21px"><Fit w={32}>18:10</Fit><Fit w={73}>07-11-2022</Fit></TrayStack>
      </Tray>
    </Taskbar>
  );
}

export default function App() {
  return (
    <Screen>
      <GlobalStyle />
      <Tabs />
      <BrowserBars />
      <ActorPage />
      <SystemBar />
    </Screen>
  );
}
